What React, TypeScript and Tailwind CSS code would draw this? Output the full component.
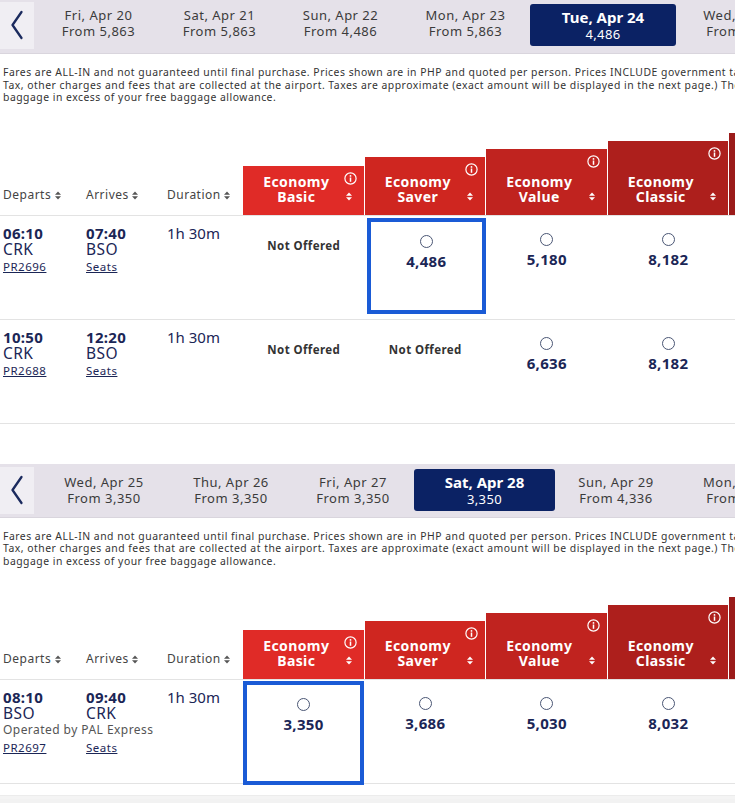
import React from "react";

type DateItem = { day: string; price: string; w: number; selected?: boolean };

type Flight = {
  dep: string;
  depCode: string;
  arr: string;
  arrCode: string;
  flight: string;
  operatedBy?: string;
  fares: (string | null)[];
  selected: number;
};

const fareHeads = [
  { name: "Basic", h: "h-[49px]", bg: "bg-[#e02b27]" },
  { name: "Saver", h: "h-[58px]", bg: "bg-[#cf2620]" },
  { name: "Value", h: "h-[66px]", bg: "bg-[#c0231f]" },
  { name: "Classic", h: "h-[74px]", bg: "bg-[#ad1f1c]" },
  { name: "Business", h: "h-[82px]", bg: "bg-[#9b1b1a]" },
];

const sections: { dates: DateItem[]; flights: Flight[]; barTop: string; textShift: string; boxClass: string[] }[] = [
  {
    barTop: "pb-[3px]",
    textShift: "pb-[5px]",
    dates: [
      { day: "Fri, Apr 20", price: "From 5,863", w: 121 },
      { day: "Sat, Apr 21", price: "From 5,863", w: 121 },
      { day: "Sun, Apr 22", price: "From 4,486", w: 121 },
      { day: "Mon, Apr 23", price: "From 5,863", w: 129 },
      { day: "Tue, Apr 24", price: "4,486", w: 146, selected: true },
      { day: "Wed, Apr 25", price: "From 3,350", w: 134 },
    ],
    flights: [
      {
        dep: "06:10",
        depCode: "CRK",
        arr: "07:40",
        arrCode: "BSO",
        flight: "PR2696",
        fares: [null, "4,486", "5,180", "8,182"],
        selected: 1,
      },
      {
        dep: "10:50",
        depCode: "CRK",
        arr: "12:20",
        arrCode: "BSO",
        flight: "PR2688",
        fares: [null, null, "6,636", "8,182"],
        selected: -1,
      },
    ],
    boxClass: ["mt-[2px] ml-[2px] h-[96px]", ""],
  },
  {
    barTop: "mt-[40px]",
    textShift: "",
    dates: [
      { day: "Wed, Apr 25", price: "From 3,350", w: 132 },
      { day: "Thu, Apr 26", price: "From 3,350", w: 122 },
      { day: "Fri, Apr 27", price: "From 3,350", w: 122 },
      { day: "Sat, Apr 28", price: "3,350", w: 141, selected: true },
      { day: "Sun, Apr 29", price: "From 4,336", w: 122 },
      { day: "Mon, Apr 30", price: "From 3,350", w: 132 },
    ],
    flights: [
      {
        dep: "08:10",
        depCode: "BSO",
        arr: "09:40",
        arrCode: "CRK",
        flight: "PR2697",
        operatedBy: "Operated by PAL Express",
        fares: ["3,350", "3,686", "5,030", "8,032"],
        selected: 0,
      },
    ],
    boxClass: ["mt-[1px] h-[104px] w-[121px]"],
  },
];

function SortIcon({ color = "#555" }: { color?: string }) {
  return (
    <svg width="6" height="9" viewBox="0 0 6 9" className="inline-block">
      <path d="M0 3.8 L3 0.5 L6 3.8 Z" fill={color} />
      <path d="M0 5.2 L6 5.2 L3 8.5 Z" fill={color} />
    </svg>
  );
}

function InfoIcon() {
  return (
    <svg width="13" height="13" viewBox="0 0 13 13">
      <circle cx="6.5" cy="6.5" r="5.6" fill="none" stroke="#fff" strokeWidth="1.2" />
      <circle cx="6.5" cy="3.9" r="0.9" fill="#fff" />
      <rect x="5.75" y="5.5" width="1.5" height="4.3" fill="#fff" />
    </svg>
  );
}

function Chevron() {
  return (
    <svg width="16" height="30" viewBox="0 0 16 30">
      <path d="M12.5 2 L3.5 15 L12.5 28" fill="none" stroke="#1b2a5e" strokeWidth="2.3" strokeLinecap="round" strokeLinejoin="round" />
    </svg>
  );
}

function DateBar({ dates, top, shift }: { dates: DateItem[]; top: string; shift: string }) {
  return (
    <div className={`flex h-[54px] items-center bg-[#e5e1e9] border-b border-[#d9d5dd] ${top}`}>
      <div className="flex h-[47px] w-[34px] items-center justify-center bg-[#f0eef3]">
        <Chevron />
      </div>
      <div className="w-[4px]" />
      {dates.map((d) => (
        <div key={d.day} style={{ width: d.w }} className="shrink-0">
          {d.selected ? (
            <div className="flex h-[42px] flex-col items-center justify-center rounded-[3px] bg-[#0b2264] text-white">
              <div className="text-[15px] font-bold leading-[17px]">{d.day}</div>
              <div className="text-[13px] leading-[16px] tracking-[0.4px]">{d.price}</div>
            </div>
          ) : (
            <div className={`flex flex-col items-center text-[13px] leading-[16px] tracking-[0.5px] text-[#3b3b3b] ${shift}`}>
              <div>{d.day}</div>
              <div>{d.price}</div>
            </div>
          )}
        </div>
      ))}
    </div>
  );
}

function Disclaimer() {
  return (
    <div className="mt-[12px] pl-[3px] text-[10.4px] leading-[12.6px] tracking-[0.5px] text-[#333] whitespace-nowrap">
      <div>
        Fares are ALL-IN and not guaranteed until final purchase. Prices shown are in PHP and quoted per person. Prices INCLUDE government taxes such as Travel
      </div>
      <div>
        Tax, other charges and fees that are collected at the airport. Taxes are approximate (exact amount will be displayed in the next page.) There may be additional fees for
      </div>
      <div>baggage in excess of your free baggage allowance.</div>
    </div>
  );
}

const cols = "grid grid-cols-[83px_81px_79px_121.5px_121.5px_121.5px_121.5px_121.5px]";

function HeaderRow() {
  return (
    <div className={`${cols} mt-[29px] h-[82px] items-end`}>
      <div className="pb-[11px] pl-[3px] text-[12px] tracking-[0.5px] text-[#444]">
        Departs <SortIcon />
      </div>
      <div className="pb-[11px] pl-[3px] text-[12px] tracking-[0.5px] text-[#444]">
        Arrives <SortIcon />
      </div>
      <div className="pb-[11px] pl-[3px] text-[12px] tracking-[0.5px] text-[#444]">
        Duration <SortIcon />
      </div>
      {fareHeads.map((f) => (
        <div
          key={f.name}
          className={`relative mr-px flex flex-col items-center justify-end pb-[11px] pr-[14px] text-white ${f.h} ${f.bg}`}
        >
          <div className="text-[14px] font-bold leading-[15px] tracking-[0.4px]">Economy</div>
          <div className="text-[14px] font-bold leading-[15px] tracking-[0.4px]">{f.name}</div>
          <div className="absolute right-[7px] top-[6px]">
            <InfoIcon />
          </div>
          <div className="absolute bottom-[12px] right-[12px] leading-none">
            <SortIcon color="#fff" />
          </div>
        </div>
      ))}
    </div>
  );
}

function FareCell({ price, selected, box }: { price: string | null; selected: boolean; box: string }) {
  if (!price) {
    return (
      <div className="pt-[21px] text-center text-[11.5px] font-bold tracking-[0.4px] text-[#333]">Not Offered</div>
    );
  }
  return (
    <div className={selected ? `border-[4px] border-[#1a5bd6] ${box}` : ""}>
      <div className={`flex flex-col items-center ${selected ? "pt-[13px]" : "pt-[17px]"}`}>
        <div className="h-[13px] w-[13px] rounded-full border-[1.5px] border-[#4a5674]" />
        <div className="mt-[4px] text-[15px] font-bold leading-[18px] tracking-[0.3px] text-[#1b2656]">{price}</div>
      </div>
    </div>
  );
}

function FlightRow({ f, box, i }: { f: Flight; box: string[]; i: number }) {
  return (
    <div className={`${cols} h-[104px] border-t border-[#e3e3e3]`}>
      <div className="col-span-3 grid grid-cols-[83px_81px_79px] content-start pl-[3px] pt-[9px] text-[#1b2656]">
        <div className="text-[15px] font-bold leading-[16px] tracking-[0.3px]">{f.dep}</div>
        <div className="text-[15px] font-bold leading-[16px] tracking-[0.3px]">{f.arr}</div>
        <div className="text-[15px] leading-[16px]">1h 30m</div>
        <div className="text-[15.5px] leading-[16px] tracking-[0.4px]">{f.depCode}</div>
        <div className="col-span-2 text-[15.5px] leading-[16px] tracking-[0.4px]">{f.arrCode}</div>
        {f.operatedBy && (
          <div className="col-span-3 mt-[1px] text-[12px] leading-[16px] tracking-[0.45px] text-[#555]">{f.operatedBy}</div>
        )}
        <div className="mt-[2px] text-[11.5px] leading-[16px] tracking-[0.5px] underline">{f.flight}</div>
        <div className="mt-[2px] text-[11.5px] leading-[16px] tracking-[0.5px] underline">Seats</div>
      </div>
      {f.fares.map((p, k) => (
        <FareCell key={k} price={p} selected={k === f.selected} box={box[i] || ""} />
      ))}
      <div />
    </div>
  );
}

export default function App() {
  return (
    <div className="h-[803px] w-[735px] overflow-hidden bg-white font-['Noto_Sans',sans-serif]">
      <div className="w-[900px]">
        {sections.map((s, si) => (
          <div key={si}>
            <DateBar dates={s.dates} top={s.barTop} shift={s.textShift} />
            <Disclaimer />
            <HeaderRow />
            {s.flights.map((f, i) => (
              <FlightRow key={f.flight} f={f} box={s.boxClass} i={i} />
            ))}
            <div className="border-t border-[#e3e3e3]" />
          </div>
        ))}
        <div className="mt-[11px] h-[4px] border-t border-[#ececec] bg-[#f4f4f4]" />
        <div className="h-[20px] bg-[#f2f2f2]" />
      </div>
    </div>
  );
}
